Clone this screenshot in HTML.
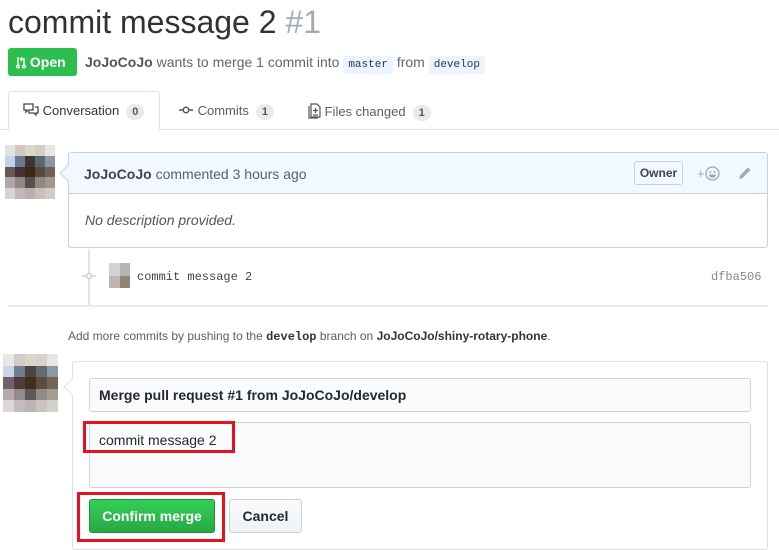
<!DOCTYPE html>
<html><head><meta charset="utf-8"><style>
*{box-sizing:border-box;margin:0;padding:0}
body{width:779px;height:550px;overflow:hidden;background:#fff;font-family:"Liberation Sans",Arial,sans-serif;color:#333;position:relative}
.a{position:absolute}
.mono{font-family:"Liberation Mono",monospace}
.av{display:grid;grid-template-columns:repeat(5,1fr);grid-template-rows:repeat(5,1fr)}
.cnt{display:inline-block;background:#eaeaea;border-radius:10px;font-size:11px;font-weight:bold;color:#555;padding:2px 6px;margin-left:7px;line-height:12px}
</style></head><body>
<div class="a" style="left:8px;top:2px;font-size:32px;color:#333;line-height:40px">commit message 2 <span style="color:#a3aab1">#1</span></div>
<div class="a" style="left:8px;top:48px;width:69px;height:28px;background:#2cbe4e;border-radius:3px;color:#fff;font-weight:bold;font-size:14px;line-height:28px;padding-left:8px">
<svg width="10" height="14" viewBox="0 0 10 14" style="vertical-align:-2px"><g fill="none" stroke="#fff" stroke-width="1.4"><circle cx="2" cy="11.5" r="1.3"/><circle cx="8" cy="11.5" r="1.3"/><path d="M2 2v8M8 10V4H5M6 2L4.5 4 6 6"/></g></svg> Open</div>
<div class="a" style="left:85px;top:53px;font-size:14px;color:#666;line-height:18px"><b style="color:#555">JoJoCoJo</b> wants to merge 1 commit into <span class="mono" style="background:#eaf5ff;color:#0366d6;color:#335;font-size:11px;padding:3px 5px;border-radius:3px">master</span> from <span class="mono" style="background:#eaf5ff;color:#335;font-size:11px;padding:3px 5px;border-radius:3px">develop</span></div>
<div class="a" style="left:0;top:129px;width:779px;border-top:1px solid #e1e4e8"></div>
<div class="a" style="left:8px;top:91px;width:152px;height:39px;border:1px solid #e1e4e8;border-bottom:none;border-radius:3px 3px 0 0;background:#fff"></div>
<div class="a" style="left:23px;top:103px;font-size:13px;color:#333;line-height:16px">
<svg width="16" height="14" viewBox="0 0 16 14" style="vertical-align:-2px"><g fill="none" stroke="#444" stroke-width="1.3"><path d="M1 1h9v6H5l-2 2V7H1z"/><path d="M12 4h3v6h-2v2l-2-2H6V8"/></g></svg> Conversation<span class="cnt">0</span></div>
<div class="a" style="left:178px;top:103px;font-size:13px;color:#586069;line-height:16px">
<svg width="16" height="12" viewBox="0 0 16 12" style="vertical-align:-1px"><g fill="none" stroke="#555" stroke-width="1.5"><circle cx="8" cy="6" r="2.7"/><path d="M1 6h4M11 6h4"/></g></svg> Commits<span class="cnt">1</span></div>
<div class="a" style="left:308px;top:103px;font-size:13px;color:#586069;line-height:16px">
<svg width="13" height="16" viewBox="0 0 13 16" style="vertical-align:-3px"><g fill="none" stroke="#555" stroke-width="1.2"><path d="M3 1h6l3 3v10H3z"/><path d="M1 3v12h9"/><path d="M7.5 5v5M5 7.5h5M5 12h5"/></g></svg> Files changed<span class="cnt">1</span></div>

<div class="a av" style="left:5px;top:145px;width:50px;height:54px">
<i style="background:#e2e2e2"></i><i style="background:#cfc9c2"></i><i style="background:#dcd7cb"></i><i style="background:#d4cec6"></i><i style="background:#e6e6e6"></i>
<i style="background:#c2d2ea"></i><i style="background:#6a7a8c"></i><i style="background:#3e3630"></i><i style="background:#5e6670"></i><i style="background:#8898a8"></i>
<i style="background:#6a5858"></i><i style="background:#4a3030"></i><i style="background:#3a2818"></i><i style="background:#5a4838"></i><i style="background:#706050"></i>
<i style="background:#b0a8a8"></i><i style="background:#908888"></i><i style="background:#585050"></i><i style="background:#908880"></i><i style="background:#a09890"></i>
<i style="background:#d8d4d4"></i><i style="background:#c0b8b8"></i><i style="background:#b8b0b0"></i><i style="background:#c8c0b8"></i><i style="background:#d0ccc8"></i></div>

<div class="a" style="left:68px;top:152px;width:700px;height:96px;border:1px solid #c0d3eb;border-radius:3px"></div>
<div class="a" style="left:69px;top:153px;width:698px;height:41px;background:#f1f8ff;border-bottom:1px solid #c0d3eb"></div>
<div class="a" style="left:62px;top:167px;width:12px;height:12px;background:#f1f8ff;border-left:1px solid #c0d3eb;border-bottom:1px solid #c0d3eb;transform:rotate(45deg)"></div>
<div class="a" style="left:84px;top:166px;font-size:14px;color:#586069;line-height:16px"><b style="color:#444">JoJoCoJo</b> commented 3 hours ago</div>
<div class="a" style="left:634px;top:161px;width:49px;height:24px;border:1px solid #c0d3eb;border-radius:3px;font-size:12px;font-weight:bold;color:#444;line-height:22px;text-align:center">Owner</div>
<div class="a" style="left:697px;top:166px;font-size:13px;color:#a0a8b0;line-height:16px">+<svg width="15" height="15" viewBox="0 0 15 15" style="vertical-align:-3px"><g fill="none" stroke="#a0a8b0" stroke-width="1.3"><circle cx="7.5" cy="7.5" r="6.5"/></g><circle cx="5.3" cy="6" r="1" fill="#a0a8b0"/><circle cx="9.7" cy="6" r="1" fill="#a0a8b0"/><path d="M4 8.5h7c0 2-1.6 3.3-3.5 3.3S4 10.5 4 8.5z" fill="#a0a8b0"/></svg></div>
<svg class="a" style="left:737px;top:166px" width="15" height="15" viewBox="0 0 15 15"><path d="M2 13l1-3.5 8-8 2.5 2.5-8 8z" fill="#a0a8b0"/></svg>
<div class="a" style="left:85px;top:212px;font-size:14px;font-style:italic;color:#555;line-height:16px">No description provided.</div>

<div class="a" style="left:88px;top:249px;width:2px;height:56px;background:#e1e4e8"></div>
<svg class="a" style="left:82px;top:270px" width="14" height="12" viewBox="0 0 14 12"><rect x="0" y="5" width="14" height="2" fill="#fff"/><circle cx="7" cy="6" r="2.5" fill="#fff" stroke="#c0c6cc" stroke-width="1.3"/><path d="M0 6h4M10 6h4" stroke="#c0c6cc" stroke-width="1.3"/></svg>
<div class="a av" style="left:109px;top:263px;width:21px;height:25px;grid-template-columns:1fr 1fr;grid-template-rows:1fr 1fr"><i style="background:#d0d2d4"></i><i style="background:#b8b4b0"></i><i style="background:#c0b6b0"></i><i style="background:#908478"></i></div>
<div class="a mono" style="left:137px;top:270px;font-size:12px;color:#444;line-height:14px">commit message 2</div>
<div class="a mono" style="left:711px;top:270px;font-size:12px;color:#888;line-height:14px">dfba506</div>
<div class="a" style="left:8px;top:305px;width:760px;border-top:2px solid #e6ebf1"></div>

<div class="a" style="left:68px;top:329px;font-size:12px;color:#586069;line-height:14px">Add more commits by pushing to the <b class="mono" style="color:#333">develop</b> branch on <b style="color:#333">JoJoCoJo/shiny-rotary-phone</b>.</div>

<div class="a av" style="left:3px;top:354px;width:55px;height:58px">
<i style="background:#e8e8e8"></i><i style="background:#d2ccc4"></i><i style="background:#dcd6ca"></i><i style="background:#d8d2ca"></i><i style="background:#e6e6e6"></i>
<i style="background:#c8d6ea"></i><i style="background:#707e90"></i><i style="background:#4c4440"></i><i style="background:#626a72"></i><i style="background:#8a98a8"></i>
<i style="background:#70606a"></i><i style="background:#523a3a"></i><i style="background:#40301e"></i><i style="background:#5e4c3c"></i><i style="background:#746454"></i>
<i style="background:#b4acac"></i><i style="background:#948c8c"></i><i style="background:#605858"></i><i style="background:#948c84"></i><i style="background:#a49c94"></i>
<i style="background:#dcd8d8"></i><i style="background:#c4bcbc"></i><i style="background:#bcb4b4"></i><i style="background:#ccc4bc"></i><i style="background:#d4d0cc"></i></div>

<div class="a" style="left:72px;top:361px;width:696px;height:189px;border:1px solid #dfe2e5;border-radius:3px"></div>
<div class="a" style="left:66px;top:381px;width:12px;height:12px;background:#fff;border-left:1px solid #dfe2e5;border-bottom:1px solid #dfe2e5;transform:rotate(45deg)"></div>
<div class="a" style="left:89px;top:378px;width:662px;height:34px;background:#fafbfc;border:1px solid #d1d5da;border-radius:3px;font-size:14px;font-weight:bold;color:#24292e;line-height:32px;padding-left:9px">Merge pull request #1 from JoJoCoJo/develop</div>
<div class="a" style="left:89px;top:422px;width:662px;height:66px;background:#fafbfc;border:1px solid #d1d5da;border-radius:3px;font-size:14px;color:#24292e;padding:8px 9px;line-height:18px">commit message 2</div>
<div class="a" style="left:83px;top:421px;width:152px;height:32px;border:3px solid #e8121f"></div>
<div class="a" style="left:89px;top:499px;width:126px;height:34px;background:linear-gradient(#34d058,#28a745);border:1px solid #23923d;border-radius:3px;color:#fff;font-weight:bold;font-size:14px;line-height:32px;text-align:center">Confirm merge</div>
<div class="a" style="left:229px;top:499px;width:73px;height:34px;background:linear-gradient(#fafbfc,#eff3f6);border:1px solid #ccd0d4;border-radius:3px;color:#24292e;font-weight:bold;font-size:14px;line-height:32px;text-align:center">Cancel</div>
<div class="a" style="left:77px;top:492px;width:148px;height:50px;border:3px solid #e8121f"></div>
</body></html>
